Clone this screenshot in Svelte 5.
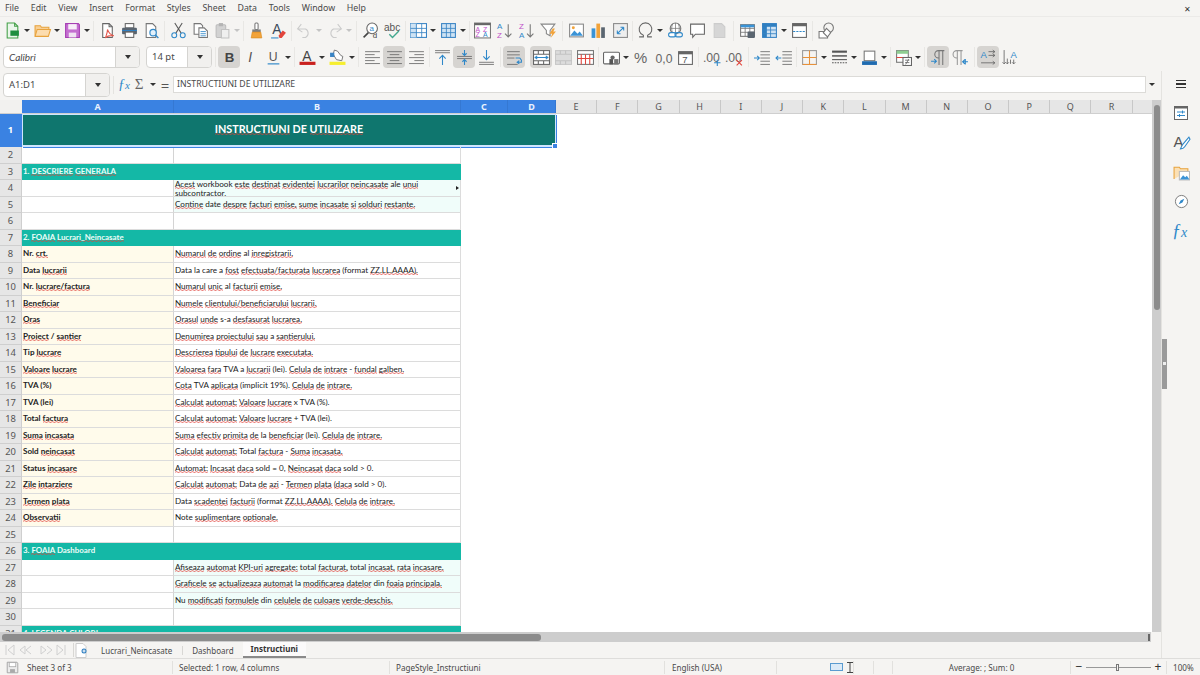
<script>
  const menus = ["File", "Edit", "View", "Insert", "Format", "Styles", "Sheet", "Data", "Tools", "Window", "Help"];

  const T = (x, y, s, fill, extra = "") =>
    `<text x="${x}" y="${y}" font-size="${s}" fill="${fill}" font-family="Liberation Sans, sans-serif" ${extra}>`;
  const tableGrid = (stroke, fill) =>
    `<rect x="1.5" y="2.5" width="13" height="11" fill="${fill}" stroke="${stroke}"/><path d="M1.5 6h13M1.5 9.7h13M5.8 2.5v11M10.2 2.5v11" stroke="${stroke}" fill="none" stroke-width=".8"/>`;
  const lines = (ys, x1, x2, c = "#6a6a6a") => ys.map((y) => `<path d="M${x1} ${y}H${x2}" stroke="${c}" stroke-width=".8"/>`).join("");
  // text alignment glyph: [start, end] of each of the five lines
  const align = (spans) => spans.map(([a, b], i) => `<path d="M${a} ${2.5 + i * 2.8}H${b}" stroke="#6a6a6a" stroke-width=".8"/>`).join("");

  // inner svg markup of each toolbar icon, viewBox 16x16
  const icons = {
    new: `<path d="M3 1h7l3 3v11H3z" fill="#eaf6ea" stroke="#43a047"/><path d="M10 1v3h3" fill="none" stroke="#43a047"/><rect x="6" y="8" width="8" height="5" fill="#1e8e3e"/>`,
    open: `<path d="M1 13V3.5h5l1 1.5h7v2" fill="#f8cf94" stroke="#e8a33d"/><path d="M1 13.5l2-6.5h12.5l-2 6.5z" fill="#fcdcae" stroke="#e8a33d"/>`,
    save: `<path d="M1.5 1.5h12l1 1v12h-13z" fill="#c46ed0" stroke="#a63fb3"/><rect x="4" y="2" width="8" height="5" fill="#f7eef8"/><rect x="4.5" y="10" width="7" height="4.5" fill="#f0e3f2"/>`,
    pdf: `<path d="M3.5 1.5h6l3 3v10h-9z" fill="#fff" stroke="#666"/><path d="M9.5 1.5v3h3" fill="none" stroke="#666"/><path d="M8 7c1 3 2 5 6 6-3-.5-6 0-8 2 1-3 2-5 2-8z" fill="none" stroke="#e2574c"/>`,
    print: `<rect x="4" y="1.5" width="8" height="4" fill="#fff" stroke="#666"/><rect x="1" y="5.5" width="14" height="6" rx="1" fill="#5a6570"/><rect x="4" y="9.5" width="8" height="5" fill="#fff" stroke="#666"/><path d="M1 8h14" stroke="#2f7fc1"/>`,
    preview: `<path d="M3 1.5h6l3 3v10H3z" fill="#fff" stroke="#777"/><circle cx="9.5" cy="10" r="3" fill="#e3f1fb" stroke="#2f88c9" stroke-width="1.1"/><path d="M11.7 12.2l2.8 2.8" stroke="#2f88c9" stroke-width="1.3"/>`,
    cut: `<path d="M4.5 1l6 9.5M11.5 1l-6 9.5" stroke="#5a5a5a" fill="none"/><circle cx="4" cy="12.5" r="2.3" fill="none" stroke="#2f88c9"/><circle cx="12" cy="12.5" r="2.3" fill="none" stroke="#2f88c9"/>`,
    copy: `<path d="M2 1.5h6l2 2v8H2z" fill="#fff" stroke="#777"/><path d="M6.5 5.5h5l3 3v6h-8z" fill="#fff" stroke="#777"/>${lines([9, 11, 13], 8, 13, "#2f88c9")}`,
    paste: `<rect x="2" y="2.5" width="9" height="12" rx="1" fill="#d2d2d2" stroke="#bcbcbc"/><rect x="4.5" y="1" width="4" height="3" fill="#b4b4b4"/><path d="M7 7h7v8H7z" fill="#efefef" stroke="#c2c2c2"/>`,
    brush: `<rect x="6.5" y="1" width="3" height="6" rx="1" fill="#fff" stroke="#777"/><rect x="4" y="7" width="8" height="2.5" fill="#808080"/><path d="M4 9.5h8l1 5.5H3z" fill="#f2a33a" stroke="#d98a1f" stroke-width=".6"/>`,
    clear: `${T(2, 11, 13, "#3b4a5a")}A</text><path d="M8 13l4-5 3 2-4 5H9z" fill="#e2453c"/><path d="M1 15h7" stroke="#2f88c9"/>`,
    undo: `<path d="M5 2L1.5 6.5 6 9.5M2 6.5h7a4.5 4.5 0 0 1 0 8H6" fill="none" stroke="#cbcbcb"/>`,
    redo: `<path d="M11 2l3.500 4.500L10 9.500M14 6.500H7a4.500 4.500 0 0 0 0 8h3" fill="none" stroke="#cbcbcb"/>`,
    find: `<circle cx="9.5" cy="6" r="5" fill="#fff" stroke="#666"/>${T(7, 8.5, 7.5, "#2f88c9")}a</text><path d="M6 10l-4.500 4.500" stroke="#444" stroke-width="1.5"/>${T(10, 15.5, 7.5, "#444")}d</text>`,
    spell: `${T(0, 8, 9.5, "#555")}abc</text><path d="M5 11.5l3 3 6-6" fill="none" stroke="#43a88f" stroke-width="1.3"/>`,
    rows: `<rect x=".5" y="1.5" width="15" height="13" fill="#fff" stroke="#3a84c4"/><rect x=".5" y="1.5" width="6" height="13" fill="#cfe3f4"/><path d="M.5 6h15M.5 10h15M6 1.5v13M11 1.5v13" stroke="#3a84c4" fill="none" stroke-width=".8"/>`,
    cols: `<rect x="1.5" y="1.5" width="13" height="13" fill="#cfe3f4" stroke="#3a84c4"/><path d="M1.5 6h13M1.5 10h13M6 1.5v13M10 1.5v13" stroke="#3a84c4" fill="none" stroke-width=".8"/>`,
    sort: `<rect x=".5" y="1" width="15" height="14" fill="#fff" stroke="#777"/><rect x=".5" y="1" width="15" height="2" fill="#666"/>${T(1.5, 9, 6.5, "#c04fc8")}A</text>${T(8.5, 9, 6.5, "#c04fc8")}Z</text>${T(1.5, 14.5, 6.5, "#c04fc8")}Z</text>${T(8.5, 14.5, 6.5, "#2f88c9")}A</text>`,
    sortAz: `${T(1, 7, 7.5, "#2f88c9")}A</text>${T(1, 15, 7.5, "#c04fc8")}Z</text><path d="M11.5 2v12M8.5 11l3 3 3-3" fill="none" stroke="#777"/>`,
    sortZa: `${T(1, 7, 7.5, "#c04fc8")}Z</text>${T(1, 15, 7.5, "#2f88c9")}A</text><path d="M11.5 2v12M8.5 11l3 3 3-3" fill="none" stroke="#777"/>`,
    filter: `<path d="M1 2h13L9.5 8v5L6 11V8z" fill="#fff" stroke="#888"/><path d="M12 6l-3 5h2.500L10 15l5-6h-2.500l1.500-3z" fill="#f2a33a"/>`,
    image: `<rect x="1.5" y="2" width="13" height="12" fill="#fff" stroke="#888"/><path d="M2 13l4-5 3 3 2-2 3 4z" fill="#3a93d6"/><circle cx="5" cy="5.5" r="1.4" fill="#f2a33a"/>`,
    chart: `<rect x="1.5" y="6" width="3.5" height="9" fill="#3a93d6"/><rect x="6" y="1.5" width="3.5" height="13.5" fill="#f2a33a"/><rect x="10.5" y="5" width="3.5" height="10" fill="#5a6570"/>`,
    pivot: `<rect x="1.5" y="1.5" width="13" height="13" fill="#eee" stroke="#888"/><path d="M5 11l6-6M11 5H8M11 5v3M5 11h3M5 11V8" fill="none" stroke="#2f88c9"/>`,
    omega: `<path d="M2 14h4v-1.500A6 6 0 1 1 10 12.500V14h4" fill="none" stroke="#666"/>`,
    link: `<circle cx="8" cy="6" r="5" fill="#fff" stroke="#777"/><path d="M3 6h10M8 1v10M5.500 1.500c-1.500 3-1.500 6 0 9M10.500 1.500c1.500 3 1.500 6 0 9" stroke="#777" fill="none" stroke-width=".7"/><rect x="1.5" y="10" width="7" height="4" rx="2" fill="#fff" stroke="#2f88c9"/><rect x="7.5" y="10" width="7" height="4" rx="2" fill="none" stroke="#2f88c9"/>`,
    comment: `<path d="M1.500 2h13v9.500H6L3.500 14.500v-3H1.500z" fill="#fff" stroke="#666"/>`,
    hf: `<path d="M3 1.500h7l3 3v10H3z" fill="#d6d6d6" stroke="#ccc"/>`,
    freeze: `${tableGrid("#777", "#fff")}<path d="M1.500 2.500h13V5h-13z" fill="#3a93d6"/><rect x="8" y="9" width="7" height="6" rx="1" fill="#5a6570"/>`,
    named: `<rect x="1.5" y="1.5" width="13" height="13" fill="#cfe3f4" stroke="#3a84c4"/><rect x="1.5" y="1.5" width="4" height="13" fill="#2f7fc1"/><rect x="1.5" y="1.5" width="13" height="3" fill="#2f7fc1"/><path d="M1.500 7.500h13M1.500 11h13M9 1.500v13" stroke="#3a84c4" fill="none" stroke-width=".8"/>`,
    hsplit: `<rect x="1.5" y="1.5" width="13" height="13" fill="#fff" stroke="#666"/><rect x="1.5" y="1.5" width="13" height="2.5" fill="#666"/><path d="M2 9h12" stroke="#2f88c9" stroke-dasharray="2 1"/>`,
    shapes: `<path d="M1 9h8v6H1z" fill="#fff" stroke="#777"/><circle cx="10" cy="5.5" r="4.500" fill="none" stroke="#777"/><path d="M8 6l4 4-3 4-4-4z" fill="#fff" stroke="#777"/>`,
    bold: `${T(3.5, 12.5, 12.5, "#444", 'font-weight="700"')}B</text>`,
    italic: `${T(5, 12.5, 13, "#555", 'font-style="italic" font-family="Liberation Serif"')}I</text>`,
    under: `${T(3.5, 11, 11.5, "#555")}U</text><path d="M2.500 14h11" stroke="#2f88c9" stroke-width="1.1"/>`,
    fcolor: `${T(3, 11, 13, "#444")}A</text><rect x=".5" y="12" width="15" height="3" fill="#c9211e"/>`,
    hl: `<path d="M5 1l3 1 3 4 2 1-1 4-5-1-3-5z" fill="#fff" stroke="#666" stroke-width=".8"/><rect x="1" y="3.5" width="4" height="4" fill="#3a84c4"/><rect x=".5" y="12" width="15" height="3" fill="#f6ee2f"/>`,
    left: align([[1, 15], [1, 10], [1, 15], [1, 10], [1, 15]]),
    center: align([[1, 15], [3.5, 12.5], [1, 15], [3.5, 12.5], [1, 15]]),
    right: align([[1, 15], [6, 15], [1, 15], [6, 15], [1, 15]]),
    top: `${lines([1.5, 3.5], 1, 15)}<path d="M8 15V6M5 9l3-3 3 3" fill="none" stroke="#2f88c9"/>`,
    mid: `${lines([7, 9], 1, 15)}<path d="M8 1v5M6 4l2 2 2-2M8 15v-5M6 12l2-2 2 2" fill="none" stroke="#2f88c9"/>`,
    bot: `${lines([12.5, 14.5], 1, 15)}<path d="M8 1v9M5 7l3 3 3-3" fill="none" stroke="#2f88c9"/>`,
    wrap: `${lines([2.5, 5.5], 1, 13)}${lines([8.5], 1, 8)}${lines([14.5], 1, 11)}<path d="M9 8.500h4l1.500 2v2H11M12.500 11l-2 1.500 2 1.500" fill="none" stroke="#2f88c9"/>`,
    merge: `<rect x=".5" y="1.5" width="15" height="13" fill="#fff" stroke="#666"/><path d="M.5 5h15M.5 11h15M5 1.500V5M10 1.500V5M5 11v3.500M10 11v3.500" stroke="#666" fill="none"/><path d="M2 8h12M4 6.500L2 8l2 1.500M12 6.500L14 8l-2 1.500" fill="none" stroke="#2f88c9"/>`,
    mergeOff: `<rect x=".5" y="1.5" width="15" height="13" fill="#dcdcdc" stroke="#c8c8c8"/><path d="M.5 5h15M.5 11h15M5 1.500v3.500M10 1.500v3.500M5 11v3.500M10 11v3.500" stroke="#c2c2c2" fill="none"/>`,
    unmerge: `<rect x=".5" y="1.5" width="15" height="13" fill="#fff" stroke="#777"/><path d="M.5 5h15" stroke="#777"/><path d="M4 5v9.500M8 5v9.500M12 5v9.500M.5 9h15" stroke="#e2453c" fill="none"/>`,
    currency: `<rect x=".5" y="3" width="15" height="11" rx="1" fill="#fff" stroke="#666"/><circle cx="9" cy="8" r="2" fill="#666"/><rect x="6" y="9.5" width="3.5" height="5" fill="#555"/><rect x="10.5" y="9.5" width="4" height="5" fill="#777"/>`,
    pct: `${T(1, 13, 14, "#666")}%</text>`,
    num: `${T(.5, 13, 11.5, "#666")}0,0</text>`,
    date: `<rect x="1.5" y="2.5" width="13" height="12" fill="#fff" stroke="#666"/><rect x="1.5" y="2.5" width="13" height="2.5" fill="#666"/>${T(5, 13, 9, "#555")}7</text>`,
    decAdd: `${T(-1, 12.5, 11.5, "#666")}.00</text><path d="M12.500 10v6M9.500 13h6" stroke="#2f88c9"/>`,
    decDel: `${T(-1, 12.5, 11.5, "#666")}.00</text><path d="M10 10.500l5 5M15 10.500l-5 5" stroke="#e2453c"/>`,
    indent: `${lines([2.5, 5.5, 8.5, 11.5, 14.5], 6, 15)}<path d="M0 8.500h5M3 6.500l2 2-2 2" fill="none" stroke="#2f88c9"/>`,
    outdent: `${lines([2.5, 5.5, 8.5, 11.5, 14.5], 6, 15)}<path d="M5 8.500H0M2 6.500l-2 2 2 2" fill="none" stroke="#2f88c9"/>`,
    border: `<rect x="1.5" y="1.5" width="13" height="13" fill="none" stroke="#999"/><path d="M8 1.500v13M1.500 8h13M1.500 14.500h13" stroke="#e8913a"/>`,
    bstyle: `<path d="M1 2.500h14" stroke="#555" stroke-width="2"/><path d="M1 6.500h14" stroke="#555" stroke-width="1.400"/><path d="M1 10h14" stroke="#555"/><path d="M1 13h14" stroke="#555" stroke-dasharray="1.500 1"/>`,
    bcolor: `<rect x="3" y="2" width="10" height="9" fill="#fff" stroke="#777"/><rect x="1" y="11.5" width="14" height="3.5" fill="#1f6bb0"/>`,
    cond: `<rect x="1.5" y="1.5" width="11" height="11" fill="#fff" stroke="#777"/><rect x="1.5" y="1.5" width="11" height="3" fill="#8fce92"/><path d="M1.500 8h6" stroke="#e2453c"/><rect x="7.5" y="8" width="8" height="7.5" fill="#fff" stroke="#666"/><path d="M9.500 10.500h4M9.500 12.800h4M13 9.500l-3 5" stroke="#666" fill="none" stroke-width=".8"/>`,
    ltr: `<path d="M8.500 15V1.500M12 15V1.500M13.500 1.500H8a3.500 3.500 0 0 0 0 7h.5" fill="none" stroke="#777"/><path d="M1 11.500h5M4 9.500l2 2-2 2" fill="none" stroke="#2f88c9"/>`,
    rtl: `<path d="M5 15V1.500M8.500 15V1.500M10 1.500H4.500a3.500 3.500 0 0 0 0 7H5" fill="none" stroke="#999"/><path d="M10 12h5M12 10l-2 2 2 2M12.500 9.500v5" fill="none" stroke="#2f88c9"/>`,
    textH: `${T(.5, 8, 9, "#2f88c9")}A</text><path d="M8 2.500h6M8 6h6M12 1l2 1.500L12 4M12 4.500L14 6l-2 1.500M1 13h13M12 11.500l2 1.500-2 1.500" fill="none" stroke="#666" stroke-width=".8"/>`,
    textV: `${T(8, 8, 9, "#2f88c9")}A</text><path d="M2 1v13M5 9v5M8 10v4M11 10v4M.5 12.500L2 14l1.500-1.500M3.500 12.500L5 14l1.500-1.500M9.500 12.500L11 14l1.500-1.500" fill="none" stroke="#666" stroke-width=".8"/>`,
  };

  const row1 = ["new", ">", "open", ">", "save", ">", "|5", "pdf", "print", "preview", "|5", "cut", "copy", "paste", "~", "|4", "brush", "clear", "|4", "undo", "~", "redo", "~", "|6", "find", "spell", "|4", "rows", ">", "cols", ">", "|4", "sort", "sortAz", "sortZa", "filter", "|6", "image", "chart", "pivot", "|3", "omega", ">", "link", "comment", "hf", "|6", "freeze", "named", ">", "hsplit", "|5", "shapes"];
  const row2 = ["|6", "!bold", "italic", "under", ">", "|4", "fcolor", ">", "hl", ">", "|5", "left", "!center", "right", "|4", "top", "!mid", "bot", "|6", "!wrap", "_5", "!merge", "mergeOff", "unmerge", "|4", "currency", ">", "pct", "num", "date", "|5", "decAdd", "decDel", "|6", "indent", "outdent", "|3", "border", ">", "bstyle", ">", "bcolor", ">", "|4", "cond", ">", "|5", "!ltr", "rtl", "|6", "!textH", "textV"];

  const columns = [
    { l: "A", w: 152, sel: true },
    { l: "B", w: 287, sel: true },
    { l: "C", w: 47, sel: true },
    { l: "D", w: 48, sel: true },
    ...["E", "F", "G", "H", "I", "J", "K", "L", "M", "N", "O", "P", "Q", "R"].map((l) => ({ l, w: 41.2, sel: false })),
  ];

  // rows after the title: n, kind and the two cells
  const rows = [
    { n: 2 },
    { n: 3, band: "1. DESCRIERE GENERALA" },
    { n: 4, wrap: true, mint: true, b: "Acest workbook este destinat evidentei lucrarilor neincasate ale unui subcontractor." },
    { n: 5, mint: true, b: "Contine date despre facturi emise, sume incasate si solduri restante." },
    { n: 6 },
    { n: 7, band: "2. FOAIA Lucrari_Neincasate" },
    { n: 8, a: "Nr. crt.", b: "Numarul de ordine al inregistrarii." },
    { n: 9, a: "Data lucrarii", b: "Data la care a fost efectuata/facturata lucrarea (format ZZ.LL.AAAA)." },
    { n: 10, a: "Nr. lucrare/factura", b: "Numarul unic al facturii emise." },
    { n: 11, a: "Beneficiar", b: "Numele clientului/beneficiarului lucrarii." },
    { n: 12, a: "Oras", b: "Orasul unde s-a desfasurat lucrarea." },
    { n: 13, a: "Proiect / santier", b: "Denumirea proiectului sau a santierului." },
    { n: 14, a: "Tip lucrare", b: "Descrierea tipului de lucrare executata." },
    { n: 15, a: "Valoare lucrare", b: "Valoarea fara TVA a lucrarii (lei). Celula de intrare - fundal galben." },
    { n: 16, a: "TVA (%)", b: "Cota TVA aplicata (implicit 19%). Celula de intrare." },
    { n: 17, a: "TVA (lei)", b: "Calculat automat: Valoare lucrare x TVA (%)." },
    { n: 18, a: "Total factura", b: "Calculat automat: Valoare lucrare + TVA (lei)." },
    { n: 19, a: "Suma incasata", b: "Suma efectiv primita de la beneficiar (lei). Celula de intrare." },
    { n: 20, a: "Sold neincasat", b: "Calculat automat: Total factura - Suma incasata." },
    { n: 21, a: "Status incasare", b: "Automat: Incasat daca sold = 0, Neincasat daca sold > 0." },
    { n: 22, a: "Zile intarziere", b: "Calculat automat: Data de azi - Termen plata (daca sold > 0)." },
    { n: 23, a: "Termen plata", b: "Data scadentei facturii (format ZZ.LL.AAAA). Celula de intrare." },
    { n: 24, a: "Observatii", b: "Note suplimentare optionale." },
    { n: 25 },
    { n: 26, band: "3. FOAIA Dashboard" },
    { n: 27, mint: true, b: "Afiseaza automat KPI-uri agregate: total facturat, total incasat, rata incasare." },
    { n: 28, mint: true, b: "Graficele se actualizeaza automat la modificarea datelor din foaia principala." },
    { n: 29, mint: true, b: "Nu modificati formulele din celulele de culoare verde-deschis." },
    { n: 30 },
    { n: 31, band: "4. LEGENDA CULORI" },
  ];

  // words the spell checker accepts, everything else gets the red wave
  const known = new Set(["1.", "2.", "3.", "4.", "DE", "Dashboard", "workbook", "ale", "subcontractor.", "date", "Data", "la", "care", "a", "(format", "Nr.", "al", "s-a", "/", "Tip", "TVA", "(%)", "(%).", "(lei)", "(lei).", "x", "+", "-", "=", ">", "Total", "Sold", "Status", "sold", "0,", "0.", "0).", "(implicit", "19%).", "Note", "din", "Nu", "total", "lei"]);

  const words = (text) => text.split(" ").map((w) => ({ w, bad: !known.has(w) }));

  const sideIcons = {
    prop: `<rect x="1.5" y="1.5" width="13" height="13" fill="#fff" stroke="#666"/><rect x="1.5" y="1.5" width="13" height="2" fill="#666"/><path d="M4 7h8M4 10.500h8M9.500 5.500v3M6.500 9v3" stroke="#2f88c9" fill="none"/>`,
    style: `${T(.5, 12, 14, "#555")}A</text><path d="M15 3l-6 7-2 4c2 0 3-.5 4-2l5-7z" fill="#fff" stroke="#2f88c9"/>`,
    gallery: `<path d="M1 14V3h5l1 1.500h7V7" fill="#fbe0b5" stroke="#e8a33d"/><rect x="6" y="7" width="9.5" height="8" fill="#fff" stroke="#bbb"/><path d="M6.500 14.500l3-4 2 2 1.500-1.500 2.500 3.500z" fill="#3a93d6"/>`,
    nav: `<circle cx="8" cy="8" r="6.5" fill="#fff" stroke="#777"/><path d="M11 5L9 9 5 11l2-4z" fill="#2f88c9"/>`,
  };
</script>

{#snippet svg(markup, size = 17)}
  <svg width={size} height={size} viewBox="0 0 16 16" overflow="visible" aria-hidden="true">{@html markup}</svg>
{/snippet}

{#snippet toolbar(items)}
  {#each items as it}
    {#if it === ">" || it === "~"}
      <span class="arr" class:dim={it === "~"}></span>
    {:else if it[0] === "|"}
      <span class="sep" style="width: {it.slice(1)}px"></span>
    {:else if it[0] === "_"}
      <span style="width: {it.slice(1)}px"></span>
    {:else}
      <span class="btn" class:on={it[0] === "!"}>{@render svg(icons[it.replace("!", "")])}</span>
    {/if}
  {/each}
{/snippet}

{#snippet spelled(text)}
  {#each words(text) as t}<span class:sp={t.bad}>{t.w}</span>{" "}{/each}
{/snippet}

<div class="app">
  <nav class="menubar">
    {#each menus as m}<span>{m}</span>{/each}
    <span class="close">✕</span>
  </nav>
  <div class="tb tb1">{@render toolbar(row1)}</div>
  <div class="tb tb2">
    <div class="combo font"><span class="val italic">Calibri</span><span class="drop"></span></div>
    <div class="combo size"><span class="val">14 pt</span><span class="drop"></span></div>
    {@render toolbar(row2)}
  </div>

  <div class="middle">
    <div class="left">
      <div class="formula">
        <div class="combo name"><span class="val">A1:D1</span><span class="drop"></span></div>
        <span class="fsep"></span>
        <span class="fx">ƒ<i>x</i></span>
        <span class="sigma">Σ</span>
        <span class="arr small"></span>
        <span class="eq">=</span>
        <div class="input">INSTRUCTIUNI DE UTILIZARE</div>
        <span class="arr end"></span>
      </div>

      <div class="sheet">
        <div class="grid">
          <div class="colhead">
            <span class="corner"></span>
            {#each columns as c}
              <span class="colcell" class:sel={c.sel} style="width: {c.w}px">{c.l}</span>
            {/each}
          </div>

          <div class="row title">
            <span class="rowhead sel">1</span>
            <div class="merged">
              <span class="titletext">{@render spelled("INSTRUCTIUNI DE UTILIZARE")}</span>
              <span class="handle"></span>
            </div>
          </div>

          {#each rows as r}
            <div class="row">
              <span class="rowhead">{r.n}</span>
              {#if r.band}
                <div class="band">{@render spelled(r.band)}</div>
              {:else}
                <div class="cell a" class:cream={r.a}>{#if r.a}{@render spelled(r.a)}{/if}</div>
                <div class="cell b" class:mint={r.mint} class:wrap={r.wrap}>
                  {#if r.b}{@render spelled(r.b)}{/if}
                  {#if r.wrap}<span class="more"></span>{/if}
                </div>
              {/if}
            </div>
          {/each}
        </div>
        <div class="vscroll"><span class="vthumb"></span></div>
      </div>

      <div class="hscroll"><span class="hthumb"></span><span class="hgrip"></span></div>

      <div class="tabs">
        <span class="navs">
          <svg width="62" height="14" viewBox="0 0 62 14" fill="none" stroke="#d0d0d0">
            <path d="M1 2v10M9 2L3 7l6 5M9 2v10" /><path d="M20 3l-5 4 5 4M20 3v8M26 3l-5 4 5 4" />
            <path d="M36 3l5 4-5 4M36 3v8M42 3l5 4-5 4" /><path d="M52 2l6 5-6 5M52 2v10M60 2v10" />
          </svg>
        </span>
        <span class="tabsep first"></span>
        <span class="newtab">
          <svg width="13" height="15" viewBox="0 0 13 15"><path d="M1 .5h7l3 3v11H1z" fill="#fff" stroke="#ccc" /><circle cx="9" cy="8" r="2.5" fill="#2f7fc1" /><path d="M9 6.500v3M7.500 8h3" stroke="#fff" /></svg>
        </span>
        <span class="tab first">Lucrari_Neincasate</span>
        <span class="tabsep"></span>
        <span class="tab">Dashboard</span>
        <span class="tab active">Instructiuni</span>
      </div>
    </div>

    <aside class="sidebar">
      <span class="burger"><i></i><i></i><i></i></span>
      {@render svg(sideIcons.prop, 16)}
      {@render svg(sideIcons.style, 17)}
      {@render svg(sideIcons.gallery, 17)}
      {@render svg(sideIcons.nav, 15)}
      <span class="fx big">ƒ<i>x</i></span>
      <span class="grip"><i></i></span>
    </aside>
  </div>

  <footer class="status">
    <div class="st s1">
      <svg width="13" height="13" viewBox="0 0 16 16"><path d="M1.500 1.500h12l1 1v12h-13z" fill="#ececec" stroke="#999" /><rect x="4" y="2" width="8" height="5" fill="#fff" stroke="#aaa" /><rect x="5" y="10" width="6" height="4.5" fill="#aaa" /></svg>
      Sheet 3 of 3
    </div>
    <div class="st s2">Selected: 1 row, 4 columns</div>
    <div class="st s3">PageStyle_Instructiuni</div>
    <div class="st s4">English (USA)</div>
    <div class="st s5">
      <span class="selbox"></span>
      <svg width="6" height="11" viewBox="0 0 6 11" fill="none" stroke="#444"><path d="M0 .5h6M0 10.500h6M3 .5v10" /></svg>
    </div>
    <div class="st s6"></div>
    <div class="st s7"></div>
    <div class="st s8">Average: ; Sum: 0</div>
    <div class="st s9">
      <span class="zm">−</span>
      <span class="slider"><span class="knob"></span></span>
      <span class="zm">+</span>
    </div>
    <div class="s10">100%</div>
  </footer>
</div>

<style>
  :global(body) {
    margin: 0;
    background: #f5f4f2;
  }

  .app {
    width: 1200px;
    height: 675px;
    display: flex;
    flex-direction: column;
    overflow: hidden;
    background: #f5f4f2;
    font-family: "Noto Sans", sans-serif;
    font-size: 8.8px;
    color: #4a4a4a;
  }

  .menubar {
    height: 16px;
    display: flex;
    align-items: center;
    gap: 11.7px;
    padding-left: 5px;
    border-bottom: 1px solid #ebeae8;
  }

  .close {
    margin-left: auto;
    margin-right: 9px;
    font-size: 8px;
    color: #333;
  }

  .tb {
    display: flex;
    align-items: center;
  }

  .tb1 {
    height: 29px;
    padding: 0 0 2px 1px;
    box-sizing: border-box;
  }

  .tb2 {
    height: 25px;
    padding: 0 0 3px 3px;
    box-sizing: border-box;
  }

  .btn {
    width: 22px;
    height: 22px;
    flex: none;
    display: flex;
    align-items: center;
    justify-content: center;
    border-radius: 4px;
  }

  .btn.on {
    background: #d6d4d1;
  }

  .arr {
    width: 8px;
    flex: none;
    display: flex;
    justify-content: center;
  }

  .arr::before {
    content: "";
    border-left: 3px solid transparent;
    border-right: 3px solid transparent;
    border-top: 3.5px solid #333;
  }

  .arr.dim::before {
    border-top-color: #c4c4c4;
  }

  .sep {
    flex: none;
    height: 20px;
    display: flex;
    justify-content: center;
  }

  .sep::before {
    content: "";
    width: 1px;
    background: #e8e7e4;
  }

  .combo {
    display: flex;
    height: 22px;
    box-sizing: border-box;
    background: #fff;
    border: 1px solid #d5d4d1;
    border-radius: 4px;
    overflow: hidden;
    flex: none;
  }

  .combo .val {
    flex: 1;
    padding-left: 5px;
    line-height: 20px;
    font-size: 9.5px;
  }

  .combo .italic {
    font-family: "Lato", sans-serif;
    font-style: italic;
    font-size: 10px;
  }

  .drop {
    width: 23px;
    background: #f1f0ee;
    border-left: 1px solid #d5d4d1;
    display: flex;
    align-items: center;
    justify-content: center;
  }

  .drop::before {
    content: "";
    border-left: 3.5px solid transparent;
    border-right: 3.5px solid transparent;
    border-top: 4px solid #333;
  }

  .font {
    width: 137px;
    margin-right: 6px;
  }

  .size {
    width: 66px;
  }

  .middle {
    flex: 1;
    min-height: 0;
    display: flex;
  }

  .left {
    width: 1161px;
    flex: none;
    display: flex;
    flex-direction: column;
  }

  .formula {
    height: 29px;
    flex: none;
    box-sizing: border-box;
    padding: 1px 0 3px 3px;
    display: flex;
    align-items: center;
  }

  .name {
    width: 107px;
    height: 24px;
  }

  .name .val {
    line-height: 22px;
  }

  .fsep {
    width: 1px;
    height: 18px;
    margin: 0 4px 0 3px;
    background: #e4e3e0;
  }

  .fx {
    font-family: "Liberation Serif", serif;
    font-style: italic;
    font-size: 14px;
    color: #2f88c9;
    width: 14px;
    flex: none;
  }

  .fx i {
    font-size: 11px;
  }

  .sigma {
    margin-left: 1px;
    width: 12px;
    flex: none;
    font-size: 15px;
    color: #666;
    text-align: center;
    font-family: "Liberation Serif", serif;
  }

  .arr.small {
    margin-left: 3px;
    width: 10px;
  }

  .eq {
    width: 12px;
    flex: none;
    margin-left: 1px;
    font-size: 15px;
    color: #555;
    text-align: center;
  }

  .input {
    margin-left: 2px;
    width: 973px;
    flex: none;
    height: 17px;
    box-sizing: border-box;
    background: #fff;
    border: 1px solid #dcdbd8;
    padding-left: 3px;
    line-height: 15px;
    font-size: 8.7px;
  }

  .arr.end {
    width: 12px;
  }

  .sheet {
    height: 532px;
    flex: none;
    display: flex;
    background: #fff;
  }

  .grid {
    width: 1152px;
    flex: none;
    overflow: hidden;
    font-family: "Lato", sans-serif;
    font-size: 8.1px;
    color: #222;
  }

  .colhead {
    height: 14px;
    display: flex;
    background: #e6e6e6;
    border-bottom: 1px solid #cfcfcf;
    box-sizing: border-box;
  }

  .corner {
    width: 22px;
    flex: none;
    background: #f2f1ef;
  }

  .colcell {
    flex: none;
    box-sizing: border-box;
    text-align: center;
    font-family: "Noto Sans", sans-serif;
    font-size: 9px;
    line-height: 14px;
    color: #555;
    border-right: 1px solid #c8c8c8;
  }

  .colcell.sel {
    background: #3a82e2;
    color: #e8f1fd;
    font-weight: 700;
    border-right-color: #3578d2;
  }

  .row {
    height: 16.5px;
    display: flex;
    box-sizing: border-box;
  }

  .row.title {
    height: 33px;
  }

  .rowhead {
    width: 22px;
    flex: none;
    box-sizing: border-box;
    background: #e6e6e6;
    border-right: 1px solid #cfcfcf;
    border-bottom: 1px solid #cfcfcf;
    text-align: center;
    font-family: "Noto Sans", sans-serif;
    font-size: 9.4px;
    line-height: 16px;
    color: #555;
  }

  .rowhead.sel {
    background: #3a82e2;
    color: #fff;
    font-weight: 700;
    line-height: 32px;
    border-color: #3a82e2;
  }

  .merged {
    width: 534px;
    box-sizing: border-box;
    background: #0f766e;
    border: 1px solid #cfe6ff;
    border-bottom: 2px solid #cfe6ff;
    box-shadow: 1px 1px 0 #3a82e2;
    position: relative;
    display: flex;
    align-items: center;
    justify-content: center;
    padding-bottom: 3px;
    color: #fff;
    font-weight: 700;
    font-size: 10.8px;
  }

  .handle {
    position: absolute;
    right: -3px;
    bottom: -4px;
    width: 4px;
    height: 4px;
    background: #3a82e2;
    border: 0.5px solid #fff;
  }

  .band {
    width: 439px;
    box-sizing: border-box;
    background: #14b8a6;
    color: #ecfdf8;
    font-weight: 700;
    padding-left: 1px;
    line-height: 15.5px;
    font-size: 7.9px;
    white-space: nowrap;
  }

  .cell {
    box-sizing: border-box;
    height: 16.5px;
    border-bottom: 1px solid #dcdcdc;
    line-height: 15.5px;
    padding-left: 1px;
    white-space: nowrap;
    overflow: hidden;
  }

  .cell.a {
    width: 152px;
    border-right: 1px solid #d4d4d4;
    font-weight: 700;
  }

  .cell.b {
    width: 287px;
    border-right: 1px solid #dcdcdc;
    position: relative;
  }

  .cell.cream {
    background: #fffbeb;
  }

  .cell.mint {
    background: #f0fdfa;
  }

  .cell.wrap {
    white-space: normal;
    line-height: 8.5px;
    padding-right: 1px;
  }

  .more {
    position: absolute;
    right: 1px;
    top: 6px;
    border-left: 3px solid #222;
    border-top: 2.5px solid transparent;
    border-bottom: 2.5px solid transparent;
  }

  /* spell check wave, the native wavy underline is too tall at this size */
  .sp {
    background: url("data:image/svg+xml,%3Csvg xmlns='http://www.w3.org/2000/svg' width='4' height='2'%3E%3Cpath d='M0 1.5Q1 0 2 .8T4 1.5' fill='none' stroke='%23e0403a' stroke-width='.7'/%3E%3C/svg%3E") repeat-x left bottom;
  }

  .vscroll {
    width: 9px;
    flex: none;
    background: #cdcdcd;
    padding-top: 5px;
    box-sizing: border-box;
    display: flex;
    justify-content: center;
  }

  .vthumb {
    width: 6px;
    height: 205px;
    border-radius: 3px;
    background: #8c8c8c;
  }

  .hscroll {
    height: 10px;
    flex: none;
    width: 1151px;
    background: #cdcdcd;
    display: flex;
    align-items: center;
    padding-left: 2px;
    box-sizing: border-box;
  }

  .hthumb {
    width: 539px;
    height: 7px;
    border-radius: 3px;
    background: #8c8c8c;
  }

  .hgrip {
    margin-left: auto;
    width: 2px;
    height: 7px;
    background: #666;
    margin-right: 1px;
  }

  .tabs {
    height: 16px;
    flex: none;
    display: flex;
    align-items: center;
    padding-left: 5px;
    font-size: 8px;
  }

  .navs {
    display: flex;
    width: 64px;
  }

  .tabsep {
    width: 1px;
    height: 9px;
    background: #d8d7d4;
    margin: 0 9px 0 10px;
  }

  .tabsep.first {
    height: 14px;
    margin: 0 1px 0 4px;
  }

  .newtab {
    display: flex;
    width: 26px;
  }

  .tab.active {
    margin-left: 9px;
    padding: 0 8px;
    height: 16px;
    line-height: 14px;
    box-sizing: border-box;
    background: #fbfafa;
    border-bottom: 2px solid #8a8a8a;
    font-weight: 700;
    color: #333;
  }

  .sidebar {
    width: 39px;
    box-sizing: border-box;
    border-left: 1px solid #e4e3e0;
    display: flex;
    flex-direction: column;
    align-items: center;
    padding-top: 7px;
    gap: 13px;
    position: relative;
  }

  .burger {
    display: flex;
    flex-direction: column;
    gap: 2px;
    width: 10px;
    height: 12px;
    justify-content: center;
    margin-bottom: 2px;
  }

  .burger i {
    height: 1.5px;
    background: #333;
  }

  .fx.big {
    font-size: 18px;
    width: 18px;
    line-height: 18px;
  }

  .fx.big i {
    font-size: 14px;
  }

  .grip {
    position: absolute;
    left: 0;
    top: 268px;
    width: 5px;
    height: 50px;
    background: #9a9a9a;
  }

  .grip i {
    position: absolute;
    left: 1px;
    top: 23px;
    width: 3px;
    height: 3px;
    background: #eee;
  }

  .status {
    height: 17px;
    flex: none;
    box-sizing: border-box;
    border-top: 1px solid #dedddb;
    display: flex;
    align-items: center;
    font-size: 8.1px;
  }

  .st {
    height: 13px;
    box-sizing: border-box;
    border-right: 1px solid #e2e1de;
    display: flex;
    align-items: center;
    flex: none;
  }

  .s1 {
    width: 173px;
    padding-left: 6px;
    gap: 8px;
  }

  .s2 {
    width: 217px;
    padding-left: 6px;
  }

  .s3 {
    width: 275px;
    padding-left: 6px;
  }

  .s4 {
    width: 112px;
    padding-left: 7px;
  }

  .s5 {
    width: 77px;
    padding-left: 53px;
    gap: 4px;
  }

  .selbox {
    width: 11px;
    height: 6px;
    background: #dbeaf7;
    border: 1px solid #5a9bd0;
  }

  .s6,
  .s7 {
    width: 19.5px;
  }

  .s8 {
    width: 178px;
    justify-content: center;
  }

  .s9 {
    width: 96px;
    justify-content: center;
    gap: 3px;
  }

  .zm {
    font-size: 12px;
    color: #333;
    width: 8px;
    text-align: center;
    line-height: 12px;
  }

  .slider {
    width: 65px;
    height: 1px;
    background: #999;
    position: relative;
  }

  .knob {
    position: absolute;
    left: 30px;
    top: -3px;
    width: 3px;
    height: 7px;
    background: #f5f4f2;
    border: 1px solid #777;
    box-sizing: border-box;
  }

  .s10 {
    padding-left: 6px;
  }
</style>
